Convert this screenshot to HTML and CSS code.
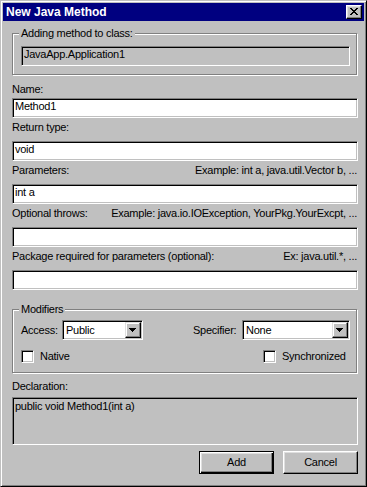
FILE: index.html
```html
<!DOCTYPE html>
<html>
	<head>
		<meta charset="UTF-8">
		<title>New Java Method</title>
		<link rel="stylesheet" href="styles.css">
	</head>
	<body>
		<div class="dialog">
			<div class="titlebar">
				<span class="title">New Java Method</span>
				<span class="close">
					<svg width="8" height="7" viewBox="0 0 8 7" shape-rendering="crispEdges"><path fill="#000" d="M0 0h2v1H0z M6 0h2v1H6z M1 1h2v1H1z M5 1h2v1H5z M2 2h4v1H2z M3 3h2v1H3z M2 4h4v1H2z M1 5h2v1H1z M5 5h2v1H5z M0 6h2v1H0z M6 6h2v1H6z"/></svg>
				</span>
			</div>
			<div class="content">
				<fieldset class="group group-class">
					<legend>Adding method to class:</legend>
					<div class="edit readonly">JavaApp.Application1</div>
				</fieldset>

				<div class="field first">
					<div class="label">Name:</div>
					<div class="edit">Method1</div>
				</div>
				<div class="field">
					<div class="label">Return type:</div>
					<div class="edit">void</div>
				</div>
				<div class="field">
					<div class="label split"><span>Parameters:</span><span>Example: int a, java.util.Vector b, ...</span></div>
					<div class="edit">int a</div>
				</div>
				<div class="field">
					<div class="label split"><span>Optional throws:</span><span>Example: java.io.IOException, YourPkg.YourExcpt, ...</span></div>
					<div class="edit"></div>
				</div>
				<div class="field">
					<div class="label split"><span>Package required for parameters (optional):</span><span>Ex: java.util.*, ...</span></div>
					<div class="edit"></div>
				</div>

				<fieldset class="group modifiers">
					<legend>Modifiers</legend>
					<div class="mod-row">
						<div class="mod-item">
							<span class="mod-label access-label">Access:</span>
							<div class="combo access">
								<span class="combo-text">Public</span>
								<span class="drop"><svg width="7" height="4" viewBox="0 0 7 4" shape-rendering="crispEdges"><path fill="#000" d="M0 0h7v1H0z M1 1h5v1H1z M2 2h3v1H2z M3 3h1v1H3z"/></svg></span>
							</div>
						</div>
						<div class="mod-item">
							<span class="mod-label spec-label">Specifier:</span>
							<div class="combo spec">
								<span class="combo-text">None</span>
								<span class="drop"><svg width="7" height="4" viewBox="0 0 7 4" shape-rendering="crispEdges"><path fill="#000" d="M0 0h7v1H0z M1 1h5v1H1z M2 2h3v1H2z M3 3h1v1H3z"/></svg></span>
							</div>
						</div>
					</div>
					<div class="checks">
						<div class="check"><span class="box"></span><span>Native</span></div>
						<div class="check"><span class="box"></span><span>Synchronized</span></div>
					</div>
				</fieldset>

				<div class="field decl">
					<div class="label">Declaration:</div>
					<div class="edit multi">public void Method1(int a)</div>
				</div>

				<div class="buttons">
					<div class="btn default">Add</div>
					<div class="btn">Cancel</div>
				</div>
			</div>
		</div>
	</body>
</html>
```

FILE: styles.css
```css
* {
	box-sizing: border-box;
}
body {
	margin: 0;
	background: #c0c0c0;
	font-family: "Liberation Sans", Arial, sans-serif;
	font-size: 11px;
	letter-spacing: -0.25px;
	color: #000;
}

/* window frame */
.dialog {
	width: 367px;
	height: 487px;
	background: #c0c0c0;
	border: 1px solid;
	border-color: #c0c0c0 #000 #000 #c0c0c0;
	box-shadow: inset 1px 1px #fff, inset -1px -1px #808080;
	padding: 2px;
	display: flex;
	flex-direction: column;
}
.titlebar {
	height: 18px;
	background: #000080;
	color: #fff;
	display: flex;
	align-items: center;
	justify-content: space-between;
	padding: 0 2px 0 3px;
}
.title {
	font-weight: bold;
	font-size: 12px;
	letter-spacing: 0;
	line-height: 14px;
}
.close {
	width: 16px;
	height: 14px;
	background: #c0c0c0;
	border: 1px solid;
	border-color: #fff #000 #000 #fff;
	box-shadow: inset -1px -1px #808080, inset 1px 1px #dfdfdf;
	padding: 2px 0 0 3px;
}
.close svg,
.drop svg {
	display: block;
}

.content {
	flex: 1;
	padding: 0 6px 0 9px;
	display: flex;
	flex-direction: column;
}

/* group boxes */
.group {
	margin: 6px 1px 0 0;
	padding: 6px 6px 8px 8px;
	border: 1px solid #808080;
	box-shadow: inset 1px 1px #fff, 1px 1px #fff;
	min-width: 0;
}
.group legend {
	padding: 0 2px;
	margin-left: -2px;
	line-height: 13px;
	background: #c0c0c0;
}
.modifiers {
	margin-top: 13px;
	padding: 4px 6px 9px 8px;
}

/* labels + edits */
.field {
	margin-top: 3px;
}
.field.first {
	margin-top: 8px;
}
.label {
	line-height: 13px;
	margin-bottom: 7px;
}
.field.first .label {
	margin-bottom: 2px;
}
.split {
	display: flex;
	justify-content: space-between;
	padding-right: 1px;
	white-space: nowrap;
}
.edit {
	height: 20px;
	background: #fff;
	border: 1px solid;
	border-color: #808080 #fff #fff #808080;
	box-shadow: inset 1px 1px #000, inset -1px -1px #c0c0c0;
	padding: 1px 2px 0;
	line-height: 13px;
	white-space: nowrap;
}
.edit.readonly {
	background: #c0c0c0;
}
.decl {
	margin-top: 7px;
}
.decl .label {
	margin-bottom: 4px;
}
.edit.multi {
	height: 48px;
	background: #c0c0c0;
	padding: 2px 2px 0;
}

/* modifiers */
.mod-row {
	display: flex;
	justify-content: space-between;
	align-items: center;
	height: 20px;
}
.mod-item {
	display: flex;
	align-items: center;
}
.mod-label {
	line-height: 13px;
}
.access-label {
	width: 41px;
}
.spec-label {
	width: 49px;
}
.combo {
	height: 20px;
	display: flex;
	background: #fff;
	border: 1px solid;
	border-color: #808080 #fff #fff #808080;
	box-shadow: inset 1px 1px #000, inset -1px -1px #c0c0c0;
	padding: 1px;
}
.combo.access {
	width: 81px;
}
.combo.spec {
	width: 108px;
}
.combo-text {
	flex: 1;
	padding-left: 2px;
	line-height: 16px;
}
.drop {
	width: 16px;
	height: 16px;
	background: #c0c0c0;
	border: 1px solid;
	border-color: #dfdfdf #000 #000 #dfdfdf;
	box-shadow: inset -1px -1px #808080, inset 1px 1px #fff;
	padding: 5px 0 0 3px;
}

.checks {
	display: grid;
	grid-template-columns: 1fr 87px;
	margin-top: 10px;
}
.check {
	display: flex;
	align-items: center;
	gap: 6px;
	line-height: 13px;
}
.box {
	width: 13px;
	height: 13px;
	background: #fff;
	border: 1px solid;
	border-color: #808080 #fff #fff #808080;
	box-shadow: inset 1px 1px #000, inset -1px -1px #c0c0c0;
}

/* buttons */
.buttons {
	display: flex;
	justify-content: flex-end;
	gap: 9px;
	margin-top: 6px;
}
.btn {
	width: 75px;
	height: 23px;
	border: 1px solid;
	border-color: #fff #000 #000 #fff;
	box-shadow: inset -1px -1px #808080, inset 1px 1px #dfdfdf;
	text-align: center;
	line-height: 20px;
}
.btn.default {
	border-color: #000;
	box-shadow: inset 1px 1px #fff, inset -1px -1px #000, inset -2px -2px #808080, inset 2px 2px #dfdfdf;
}
```
